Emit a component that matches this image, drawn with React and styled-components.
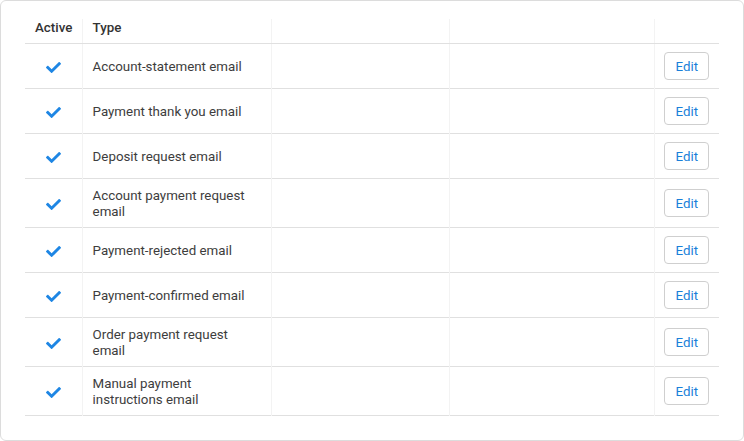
import React from 'react';
import styled, { createGlobalStyle } from 'styled-components';
import { FaCheck } from 'react-icons/fa';

const GlobalStyle = createGlobalStyle`
  html, body {
    margin: 0;
    padding: 0;
    background: #fff;
  }
  body {
    font-family: Roboto, 'Noto Sans', 'Liberation Sans', sans-serif;
    font-size: 13.33px;
    color: #333;
  }
`;

const Card = styled.div`
  box-sizing: border-box;
  width: 744px;
  height: 441px;
  border: 1px solid #dcdcdc;
  border-radius: 6px;
  padding: 18px 24px 24px 24px;
  background: #fff;
`;

const Table = styled.table`
  width: 100%;
  table-layout: fixed;
  border-collapse: collapse;
`;

const HeadCell = styled.th`
  text-align: left;
  font-weight: 500;
  color: #333;
  line-height: 16px;
  padding: 1px 10px 7px;
  height: 16px;
  border-bottom: 1px solid #e0e0e0;
  border-left: ${p => (p.$first ? 'none' : '1px solid #f3f3f3')};
`;

const Row = styled.tr`
  border-bottom: 1px solid #e0e0e0;
`;

const Cell = styled.td`
  padding: ${p => (p.$button ? '8px 10px 8px 9px' : '9px 10px 7px')};
  line-height: 16px;
  vertical-align: middle;
  color: #3d3d3d;
  text-align: ${p => (p.$center ? 'center' : 'left')};
  border-left: ${p => (p.$first ? 'none' : '1px solid #f3f3f3')};
`;

const Check = styled(FaCheck)`
  display: block;
  margin: 1px auto 0;
  color: #1e86e4;
  width: 15px;
  height: 15px;
`;

const EditButton = styled.button`
  box-sizing: border-box;
  display: block;
  width: 45px;
  height: 28px;
  padding: 1px 0 0;
  border: 1px solid #cfcfcf;
  border-radius: 4px;
  background: #fff;
  color: #1a7fd9;
  font-family: inherit;
  font-size: 13.33px;
  cursor: pointer;
`;

const emails = [
  'Account-statement email',
  'Payment thank you email',
  'Deposit request email',
  'Account payment request email',
  'Payment-rejected email',
  'Payment-confirmed email',
  'Order payment request email',
  'Manual payment instructions email',
];

function App() {
  return (
    <>
      <GlobalStyle />
      <Card>
        <Table>
          <colgroup>
            <col style={{ width: 57 }} />
            <col style={{ width: 189 }} />
            <col style={{ width: 178 }} />
            <col style={{ width: 205 }} />
            <col style={{ width: 64 }} />
          </colgroup>
          <thead>
            <tr>
              <HeadCell $first>Active</HeadCell>
              <HeadCell>Type</HeadCell>
              <HeadCell />
              <HeadCell />
              <HeadCell />
            </tr>
          </thead>
          <tbody>
            {emails.map(name => (
              <Row key={name}>
                <Cell $first $center>
                  <Check />
                </Cell>
                <Cell>{name}</Cell>
                <Cell />
                <Cell />
                <Cell $button>
                  <EditButton>Edit</EditButton>
                </Cell>
              </Row>
            ))}
          </tbody>
        </Table>
      </Card>
    </>
  );
}

export default App;
